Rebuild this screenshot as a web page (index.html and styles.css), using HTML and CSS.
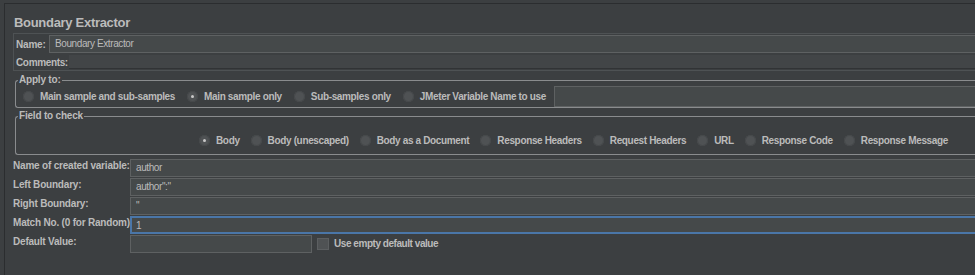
FILE: index.html
```html
<!DOCTYPE html>
<html lang="en">
<head>
    <meta charset="UTF-8">
    <title>Boundary Extractor</title>
    <link rel="stylesheet" href="styles.css">
</head>
<body>
    <div class="panel">
        <div class="title">Boundary Extractor</div>

        <div class="namebox">
            <div class="row">
                <label class="lbl name-lbl">Name:</label>
                <div class="input name-input">Boundary Extractor</div>
            </div>
            <div class="row comments">
                <label class="lbl">Comments:</label>
                <div class="area"></div>
            </div>
        </div>

        <fieldset class="group apply">
            <legend>Apply to:</legend>
            <div class="radios">
                <span class="radio"><i></i>Main sample and sub-samples</span>
                <span class="radio on"><i></i>Main sample only</span>
                <span class="radio"><i></i>Sub-samples only</span>
                <span class="radio"><i></i>JMeter Variable Name to use</span>
                <div class="input var-input"></div>
            </div>
        </fieldset>

        <fieldset class="group target">
            <legend>Field to check</legend>
            <div class="radios">
                <span class="radio on"><i></i>Body</span>
                <span class="radio"><i></i>Body (unescaped)</span>
                <span class="radio"><i></i>Body as a Document</span>
                <span class="radio"><i></i>Response Headers</span>
                <span class="radio"><i></i>Request Headers</span>
                <span class="radio"><i></i>URL</span>
                <span class="radio"><i></i>Response Code</span>
                <span class="radio"><i></i>Response Message</span>
            </div>
        </fieldset>

        <div class="fields">
            <label class="lbl">Name of created variable:</label>
            <div class="input">author</div>
            <label class="lbl">Left Boundary:</label>
            <div class="input">author":"</div>
            <label class="lbl">Right Boundary:</label>
            <div class="input">"</div>
            <label class="lbl">Match No. (0 for Random):</label>
            <div class="input focus">1</div>
            <label class="lbl">Default Value:</label>
            <div class="default-row">
                <div class="input short"></div>
                <span class="cb"><i></i>Use empty default value</span>
            </div>
        </div>
    </div>
</body>
</html>
```

FILE: styles.css
```css
/* Fond global, theme sombre */
body {
    margin: 0;
    background-color: #3c3f41;
    font-family: 'Liberation Sans', Arial, sans-serif;
    font-size: 10px;
    color: #bbbbbb;
    overflow: hidden;
    height: 275px;
}

.panel {
    margin: 3px 0 0 4px;
    border-top: 1px solid #2b2d2f;
    border-left: 1px solid #2b2d2f;
    padding: 0 0 0 8px;
    width: 1200px;
    height: 280px;
}

/* Titre */
.title {
    font-size: 13px;
    font-weight: bold;
    letter-spacing: -0.3px;
    line-height: 17px;
    padding: 10px 0 0 1px;
    height: 17px;
}

.lbl {
    font-weight: bold;
    letter-spacing: -0.2px;
    white-space: nowrap;
}

/* Champs de saisie */
.input {
    background-color: #45494a;
    border: 1px solid #5e6162;
    box-sizing: border-box;
    height: 18px;
    line-height: 16px;
    padding: 0 5px;
    letter-spacing: -0.4px;
    white-space: nowrap;
}

.input.focus {
    border: 2px solid #4a76a8;
    padding: 0 4px;
    line-height: 15px;
}

/* Bloc nom + commentaires */
.namebox {
    margin-top: 2px;
    border: 1px solid #4e5254;
    border-right: none;
    padding: 1px 0 1px 1px;
}

.row {
    display: flex;
    align-items: center;
}

.row .lbl {
    padding-left: 1px;
}

.name-lbl {
    width: 33px;
}

.name-input {
    flex: 1;
}

.comments {
    margin-top: 2px;
    height: 14px;
}

.comments .lbl {
    letter-spacing: -0.35px;
    margin-right: 1px;
}

.area {
    flex: 1;
    height: 14px;
    background-color: #424547;
    border-bottom: 1px solid #313335;
    box-sizing: border-box;
}

/* Groupes avec bordure titree */
.group {
    margin: 0 0 0 2px;
    padding: 0;
    border: 1px solid #8a8c8e;
    border-right: none;
    border-radius: 3px 0 0 3px;
    min-width: 0;
}

.group legend {
    font-weight: bold;
    letter-spacing: -0.2px;
    padding: 0 1px;
    margin-left: 2px;
    line-height: 12px;
}

.apply {
    margin-top: 3px;
}

.target {
    margin-top: 2px;
    padding-bottom: 7px;
}

.radios {
    display: flex;
    align-items: center;
    font-weight: bold;
    letter-spacing: -0.35px;
    white-space: nowrap;
}

.apply .radios {
    padding: 0 0 0 7px;
}

.target .radios {
    padding: 12px 0 0 183px;
    height: 13px;
}

.radio {
    display: flex;
    align-items: center;
    margin-right: 12px;
}

.target .radio {
    margin-right: 11px;
}

.radio i {
    width: 11px;
    height: 11px;
    border-radius: 50%;
    background-color: #4f5254;
    box-shadow: inset 0 0 0 1px #46494b;
    margin-right: 6px;
    position: relative;
}

.radio.on i::after {
    content: "";
    position: absolute;
    left: 4px;
    top: 4px;
    width: 3px;
    height: 3px;
    border-radius: 50%;
    background-color: #c8c8c8;
}

.var-input {
    width: 440px;
    height: 21px;
    margin-left: -4px;
}

/* Grille libelle / valeur */
.fields {
    display: grid;
    grid-template-columns: 117px 1fr;
    grid-auto-rows: 19px;
    align-items: center;
    margin-top: 3px;
}

.fields .lbl {
    align-self: start;
    line-height: 14px;
    padding-top: 1px;
}

.default-row {
    display: flex;
    align-items: center;
}

.input.short {
    width: 182px;
}

.cb {
    display: flex;
    align-items: center;
    margin-left: 5px;
    font-weight: bold;
    letter-spacing: -0.45px;
}

.cb i {
    width: 10px;
    height: 10px;
    background-color: #4f5254;
    border: 1px solid #5c5f61;
    margin-right: 5px;
}
```
